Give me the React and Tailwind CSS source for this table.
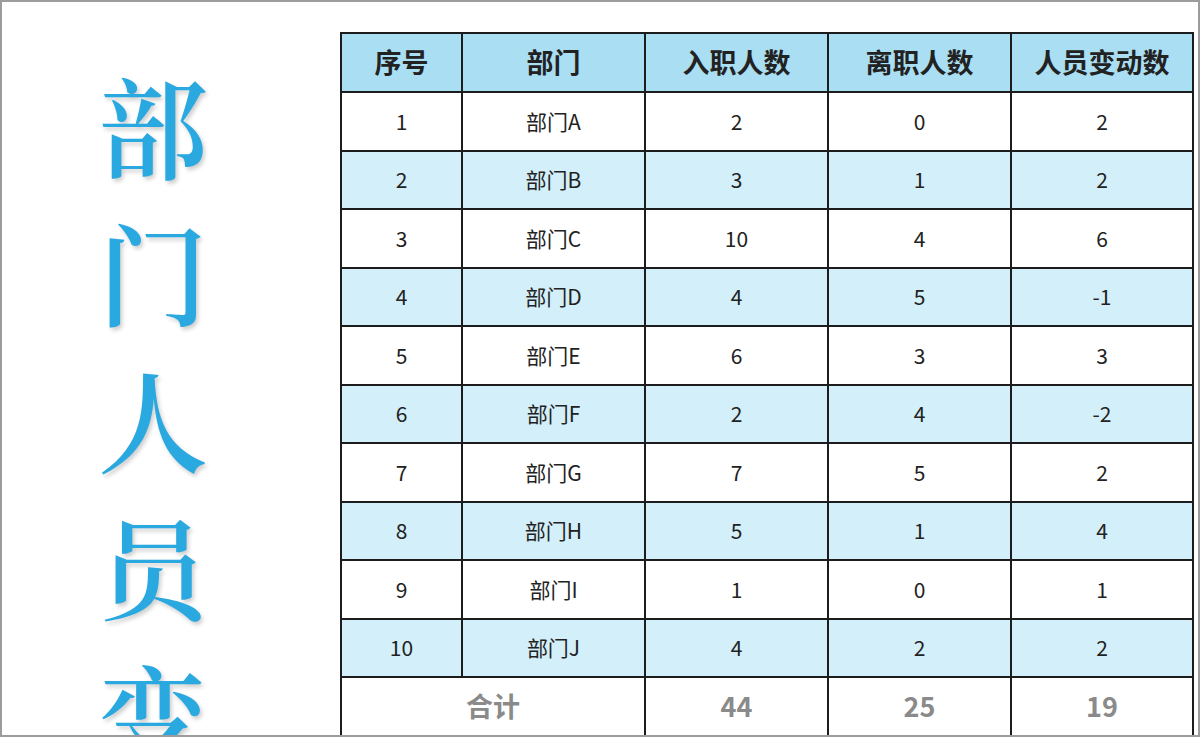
const rows = [
  [1, '部门A', 2, 0, 2],
  [2, '部门B', 3, 1, 2],
  [3, '部门C', 10, 4, 6],
  [4, '部门D', 4, 5, -1],
  [5, '部门E', 6, 3, 3],
  [6, '部门F', 2, 4, -2],
  [7, '部门G', 7, 5, 2],
  [8, '部门H', 5, 1, 4],
  [9, '部门I', 1, 0, 1],
  [10, '部门J', 4, 2, 2],
];

const headers = ['序号', '部门', '入职人数', '离职人数', '人员变动数'];
const colWidths = ['w-[121px]', 'w-[183px]', 'w-[183px]', 'w-[183px]', 'w-[182px]'];

export default function App() {
  return (
    <div className="w-[1200px] h-[737px] overflow-hidden bg-white border-2 border-[#9c9c9c] flex font-['Noto_Sans_CJK_SC',sans-serif]">
      {/* big vertical title */}
      <div className="w-[338px] shrink-0 flex flex-col items-center pt-[48px] pr-[36px] text-[#2aa9e0] text-[110px] leading-[147px] font-semibold font-['Noto_Serif_CJK_SC','Noto_Sans_CJK_SC',serif] [text-shadow:2px_3px_4px_rgba(0,0,0,0.2)]">
        {'部门人员变动'.split('').map((c, i) => (
          <div key={i} className="h-[147px] shrink-0">{c}</div>
        ))}
      </div>

      <div className="pt-[30px]">
        <table className="border-collapse text-center text-[#222]">
          <thead>
            <tr className="bg-[#a9def3] h-[59px]">
              {headers.map((h, i) => (
                <th key={h} className={`${colWidths[i]} border-2 border-[#1c1c1c] text-[27px] font-bold`}>{h}</th>
              ))}
            </tr>
          </thead>
          <tbody>
            {rows.map((r, i) => (
              <tr key={r[0]} className={`h-[58.5px] ${i % 2 === 1 ? 'bg-[#d3eff9]' : 'bg-white'}`}>
                {r.map((v, j) => (
                  <td key={j} className="border-2 border-[#1c1c1c] text-[21px]">{v}</td>
                ))}
              </tr>
            ))}
            <tr className="h-[58.5px] bg-white text-[#8a8a8a] font-bold text-[27px]">
              <td colSpan={2} className="border-2 border-[#1c1c1c]">合计</td>
              <td className="border-2 border-[#1c1c1c]">44</td>
              <td className="border-2 border-[#1c1c1c]">25</td>
              <td className="border-2 border-[#1c1c1c]">19</td>
            </tr>
          </tbody>
        </table>
      </div>
    </div>
  );
}
